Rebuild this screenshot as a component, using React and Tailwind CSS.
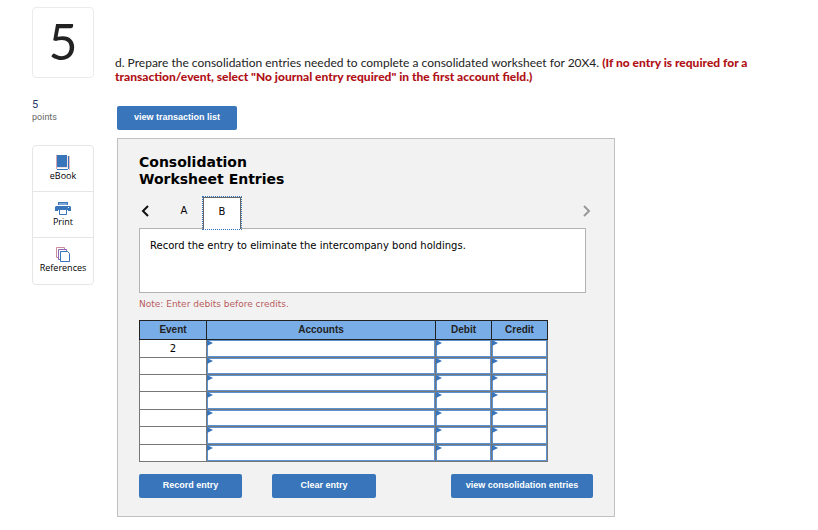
import React, { useState } from 'react';

const rows = [
  { id: 1, event: '2', height: 'h-[17px]' },
  { id: 2, event: '', height: 'h-4' },
  { id: 3, event: '', height: 'h-4' },
  { id: 4, event: '', height: 'h-[17px]' },
  { id: 5, event: '', height: 'h-4' },
  { id: 6, event: '', height: 'h-[17px]' },
  { id: 7, event: '', height: 'h-4' },
];

const BookIcon = () => (
  <svg width="14" height="15" viewBox="0 0 14 15" aria-hidden="true">
    <path d="M1 0h10v12H1z" fill="#3875bb" />
    <path d="M.5 0v14" stroke="#d9a3ad" />
    <path d="M1 12.500h10.500V1" stroke="#f2dfe4" fill="none" />
    <path d="M1 14.500h11" stroke="#3875bb" />
    <path d="M12.500 1v13" stroke="#3875bb" />
    <path d="M13.500 1v14" stroke="#e3b9bf" />
  </svg>
);

const PrintIcon = () => (
  <svg width="16" height="13" viewBox="0 0 16 13" aria-hidden="true">
    <path d="M3 0h10v3H3z" fill="#3875bb" />
    <path d="M4 1h8v2H4z" fill="#7ba6d8" />
    <path d="M1 4h14l1 1v4h-3V8H3v1H0V5z" fill="#3875bb" />
    <path d="M4.500 7.500h7v5h-7z" fill="#fff" stroke="#3875bb" />
    <path d="M13 5.500h1" stroke="#fff" />
  </svg>
);

const PagesIcon = () => (
  <svg width="14" height="15" viewBox="0 0 14 15" fill="#fff" aria-hidden="true">
    <path d="M.5.5h8v10h-8z" stroke="#c98d9b" />
    <path d="M2.500 2.500h8v10h-8z" stroke="#8b68b5" />
    <path d="M4.500 4.500h7l2 2v8h-9z" stroke="#3875bb" />
  </svg>
);

const tools = [
  { name: 'eBook', Icon: BookIcon },
  { name: 'Print', Icon: PrintIcon },
  { name: 'References', Icon: PagesIcon },
];

const BlueButton = ({ children, className }) => (
  <button
    type="button"
    className={`h-6 rounded-xs bg-[#3875bb] font-['Liberation_Sans',Arial,sans-serif] text-[9px] font-bold text-white ${className}`}
  >
    {children}
  </button>
);

// Editable cell with the small marker in its top left corner
const EntryCell = ({ label, height }) => (
  <td className="relative border border-[#777] p-0">
    <input
      type="text"
      aria-label={label}
      className={`block w-full border border-[#5b93d2] bg-white px-2 text-[10px] outline-none ${height}`}
    />
    <svg className="absolute top-0 left-0" width="6" height="6" viewBox="0 0 6 6" aria-hidden="true">
      <path d="M0 0l6 3-6 3z" fill="#3875bb" />
    </svg>
  </td>
);

const Sidebar = () => (
  <aside className="w-[62px] shrink-0">
    <div className="flex h-[71px] items-center justify-center rounded border border-[#ebebeb] pb-1 font-[Lato,sans-serif] text-[50px] leading-none text-[#222]">
      5
    </div>
    <div className="mt-5 font-[Roboto,sans-serif] leading-[13px]">
      <div className="text-[11px] text-[#1f3864]">5</div>
      <div className="text-[9px] text-[#666]">points</div>
    </div>
    <nav className="mt-[21px] divide-y divide-[#e6e6e6] rounded border border-[#e6e6e6]">
      {tools.map(({ name, Icon }) => (
        <a key={name} href="#" className="flex h-[46px] flex-col items-center pt-2 text-[9px] leading-3 text-black">
          <span className="flex h-4 items-center">
            <Icon />
          </span>
          {name}
        </a>
      ))}
    </nav>
  </aside>
);

const App = () => {
  const [tab, setTab] = useState('B');

  return (
    <div className="flex bg-white px-8 pt-[7px] pb-3 font-['Open_Sans',sans-serif]">
      <Sidebar />
      <main className="ml-[21px] min-w-0 flex-1 pt-[49px]">
        <p className="max-w-[650px] font-[Lato,sans-serif] text-[12px] leading-[14px] text-[#222]">
          d. Prepare the consolidation entries needed to complete a consolidated worksheet for 20X4.{' '}
          <b className="font-black text-[#b01116]">
            (If no entry is required for a transaction/event, select "No journal entry required" in the first account
            field.)
          </b>
        </p>
        <BlueButton className="mt-[22px] ml-0.5 block w-[120px]">view transaction list</BlueButton>

        <section className="mt-2 ml-0.5 max-w-[498px] border border-[#c0c0c0] bg-[#f2f2f2] px-[21px] pt-[15px] pb-[18px] font-['DejaVu_Sans',Verdana,sans-serif]">
          <h1 className="text-[14px] leading-[17px] font-bold text-black">
            Consolidation
            <br />
            Worksheet Entries
          </h1>

          <div className="mt-[9px] mr-0.5 flex h-[31px] items-center">
            <button type="button" aria-label="Previous" className="w-[26px] pb-1 pl-0.5">
              <svg width="8" height="12" viewBox="0 0 8 12" fill="none" aria-hidden="true">
                <path d="M7 1L2 6l5 5" stroke="#111" strokeWidth="2" />
              </svg>
            </button>
            {['A', 'B'].map((name) => (
              <button
                key={name}
                type="button"
                onClick={() => setTab(name)}
                className={
                  tab === name
                    ? 'z-10 h-8 w-[38px] border border-b-0 border-[#666] bg-white pb-1 text-[10px] outline-1 outline-dotted outline-[#3875bb]'
                    : 'h-8 w-[38px] pb-1 text-[10px]'
                }
              >
                {name}
              </button>
            ))}
            <button type="button" aria-label="Next" className="ml-auto pb-1">
              <svg width="8" height="12" viewBox="0 0 8 12" fill="none" aria-hidden="true">
                <path d="M1 1l5 5-5 5" stroke="#999" strokeWidth="2" />
              </svg>
            </button>
          </div>

          <div className="mr-[7px] h-[65px] border border-[#b3b3b3] bg-white px-2.5 py-[11px] text-[10px] leading-3 text-black">
            Record the entry to eliminate the intercompany bond holdings.
          </div>
          <p className="mt-[5px] text-[9px] leading-3 text-[#b85c60]">Note: Enter debits before credits.</p>

          <table className="mt-2.5 w-full max-w-[409px] table-fixed border-collapse border border-[#777] bg-white">
            <thead>
              <tr className="h-[19px] bg-[#79ade7] font-['Liberation_Sans',Arial,sans-serif] text-[10px] leading-3 text-[#222]">
                <th className="w-[67px] border border-[#222] p-0">Event</th>
                <th className="border border-[#222] p-0">Accounts</th>
                <th className="w-14 border border-[#222] p-0">Debit</th>
                <th className="w-14 border border-[#222] p-0">Credit</th>
              </tr>
            </thead>
            <tbody>
              {rows.map((row) => (
                <tr key={row.id}>
                  <td className="border border-[#777] p-0 text-center text-[10px] leading-3">{row.event}</td>
                  <EntryCell label={`Account, line ${row.id}`} height={row.height} />
                  <EntryCell label={`Debit, line ${row.id}`} height={row.height} />
                  <EntryCell label={`Credit, line ${row.id}`} height={row.height} />
                </tr>
              ))}
            </tbody>
          </table>

          <div className="mt-3 flex">
            <BlueButton className="w-[103px]">Record entry</BlueButton>
            <BlueButton className="ml-[30px] w-[104px]">Clear entry</BlueButton>
            <BlueButton className="ml-auto w-[142px]">view consolidation entries</BlueButton>
          </div>
        </section>
      </main>
    </div>
  );
};

export default App;
